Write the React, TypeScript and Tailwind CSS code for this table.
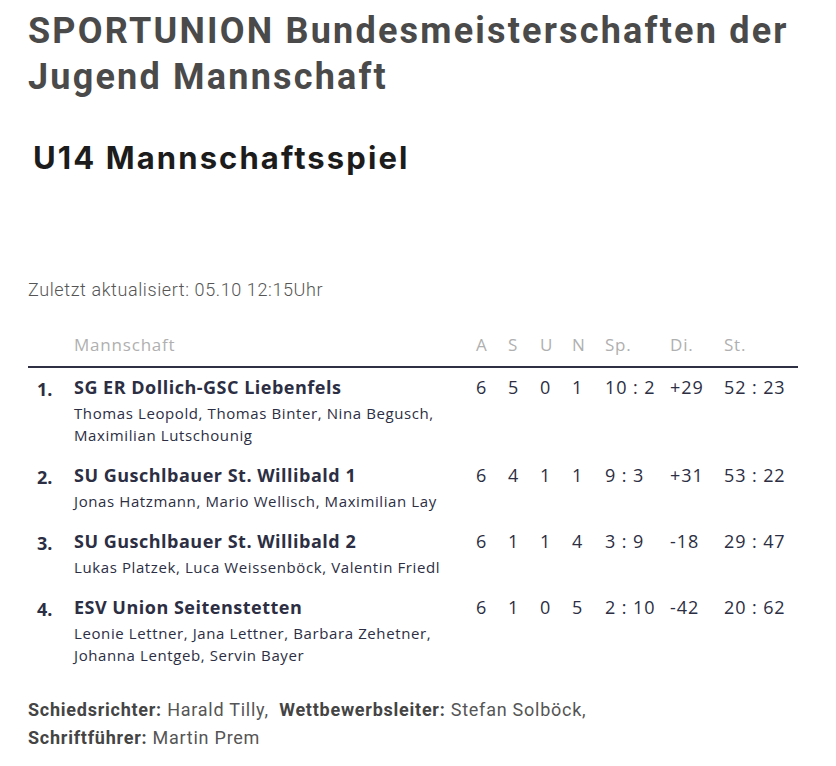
import React from "react";

type Row = {
  rank: string;
  team: string;
  players: string[];
  a: string;
  s: string;
  u: string;
  n: string;
  sp: string;
  di: string;
  st: string;
};

const rows: Row[] = [
  {
    rank: "1.",
    team: "SG ER Dollich-GSC Liebenfels",
    players: ["Thomas Leopold, Thomas Binter, Nina Begusch,", "Maximilian Lutschounig"],
    a: "6", s: "5", u: "0", n: "1", sp: "10 : 2", di: "+29", st: "52 : 23",
  },
  {
    rank: "2.",
    team: "SU Guschlbauer St. Willibald 1",
    players: ["Jonas Hatzmann, Mario Wellisch, Maximilian Lay"],
    a: "6", s: "4", u: "1", n: "1", sp: "9 : 3", di: "+31", st: "53 : 22",
  },
  {
    rank: "3.",
    team: "SU Guschlbauer St. Willibald 2",
    players: ["Lukas Platzek, Luca Weissenböck, Valentin Friedl"],
    a: "6", s: "1", u: "1", n: "4", sp: "3 : 9", di: "-18", st: "29 : 47",
  },
  {
    rank: "4.",
    team: "ESV Union Seitenstetten",
    players: ["Leonie Lettner, Jana Lettner, Barbara Zehetner,", "Johanna Lentgeb, Servin Bayer"],
    a: "6", s: "1", u: "0", n: "5", sp: "2 : 10", di: "-42", st: "20 : 62",
  },
];

const cols = "grid grid-cols-[46px_402px_32px_32px_32px_33px_65px_54px_74px]";
const num = "text-[18px] leading-[26px] tracking-[0.9px]";

export default function App() {
  return (
    <div className="min-h-[766px] w-[836px] bg-white pl-[28px] pt-[8px]" style={{ fontFamily: "'Open Sans', sans-serif" }}>
      <h1 className="text-[36px] font-bold leading-[46px] tracking-[2.2px] text-[#4a4a4a] [font-family:Roboto,sans-serif]">
        SPORTUNION Bundesmeisterschaften der
        <br />
        Jugend Mannschaft
      </h1>
      <h2 className="mt-[38px] pl-[5px] text-[31px] font-bold leading-[40px] tracking-[2.1px] text-[#1c1c1c] [font-family:Inter,sans-serif]">
        U14 Mannschaftsspiel
      </h2>
      <p className="mt-[100px] text-[18px] font-light leading-[24px] tracking-[0.6px] text-[#555] [font-family:Roboto,sans-serif]">
        Zuletzt aktualisiert: 05.10 12:15Uhr
      </p>
      <div className="mt-[31px] w-[770px] text-[#2c2e43]">
        <div className={`${cols} border-b-2 border-[#2f3044] pb-[9px] text-[17px] leading-[24px] tracking-[0.8px] text-[#b0b0b0]`}>
          <div></div>
          <div>Mannschaft</div>
          <div>A</div>
          <div>S</div>
          <div>U</div>
          <div>N</div>
          <div>Sp.</div>
          <div>Di.</div>
          <div>St.</div>
        </div>
        {rows.map((r) => (
          <div key={r.rank} className={`${cols} pt-[6px] pb-[10px]`}>
            <div className="pl-[9px] pt-[2px] text-[18px] font-bold leading-[26px]">{r.rank}</div>
            <div>
              <div className="mb-[2px] text-[18px] font-bold leading-[26px] tracking-[0.5px]">{r.team}</div>
              {r.players.map((p) => (
                <div key={p} className="text-[15px] leading-[22px] tracking-[0.6px]">{p}</div>
              ))}
            </div>
            <div className={num}>{r.a}</div>
            <div className={num}>{r.s}</div>
            <div className={num}>{r.u}</div>
            <div className={num}>{r.n}</div>
            <div className={num}>{r.sp}</div>
            <div className={num}>{r.di}</div>
            <div className={num}>{r.st}</div>
          </div>
        ))}
      </div>
      <div className="mt-[20px] text-[18px] leading-[28px] tracking-[0.75px] text-[#555] [font-family:Roboto,sans-serif]">
        <div>
          <span className="font-bold text-[#444]">Schiedsrichter:</span> Harald Tilly,{"\u00a0 "}
          <span className="font-bold text-[#444]">Wettbewerbsleiter:</span> Stefan Solböck,
        </div>
        <div>
          <span className="font-bold text-[#444]">Schriftführer:</span> Martin Prem
        </div>
      </div>
    </div>
  );
}
